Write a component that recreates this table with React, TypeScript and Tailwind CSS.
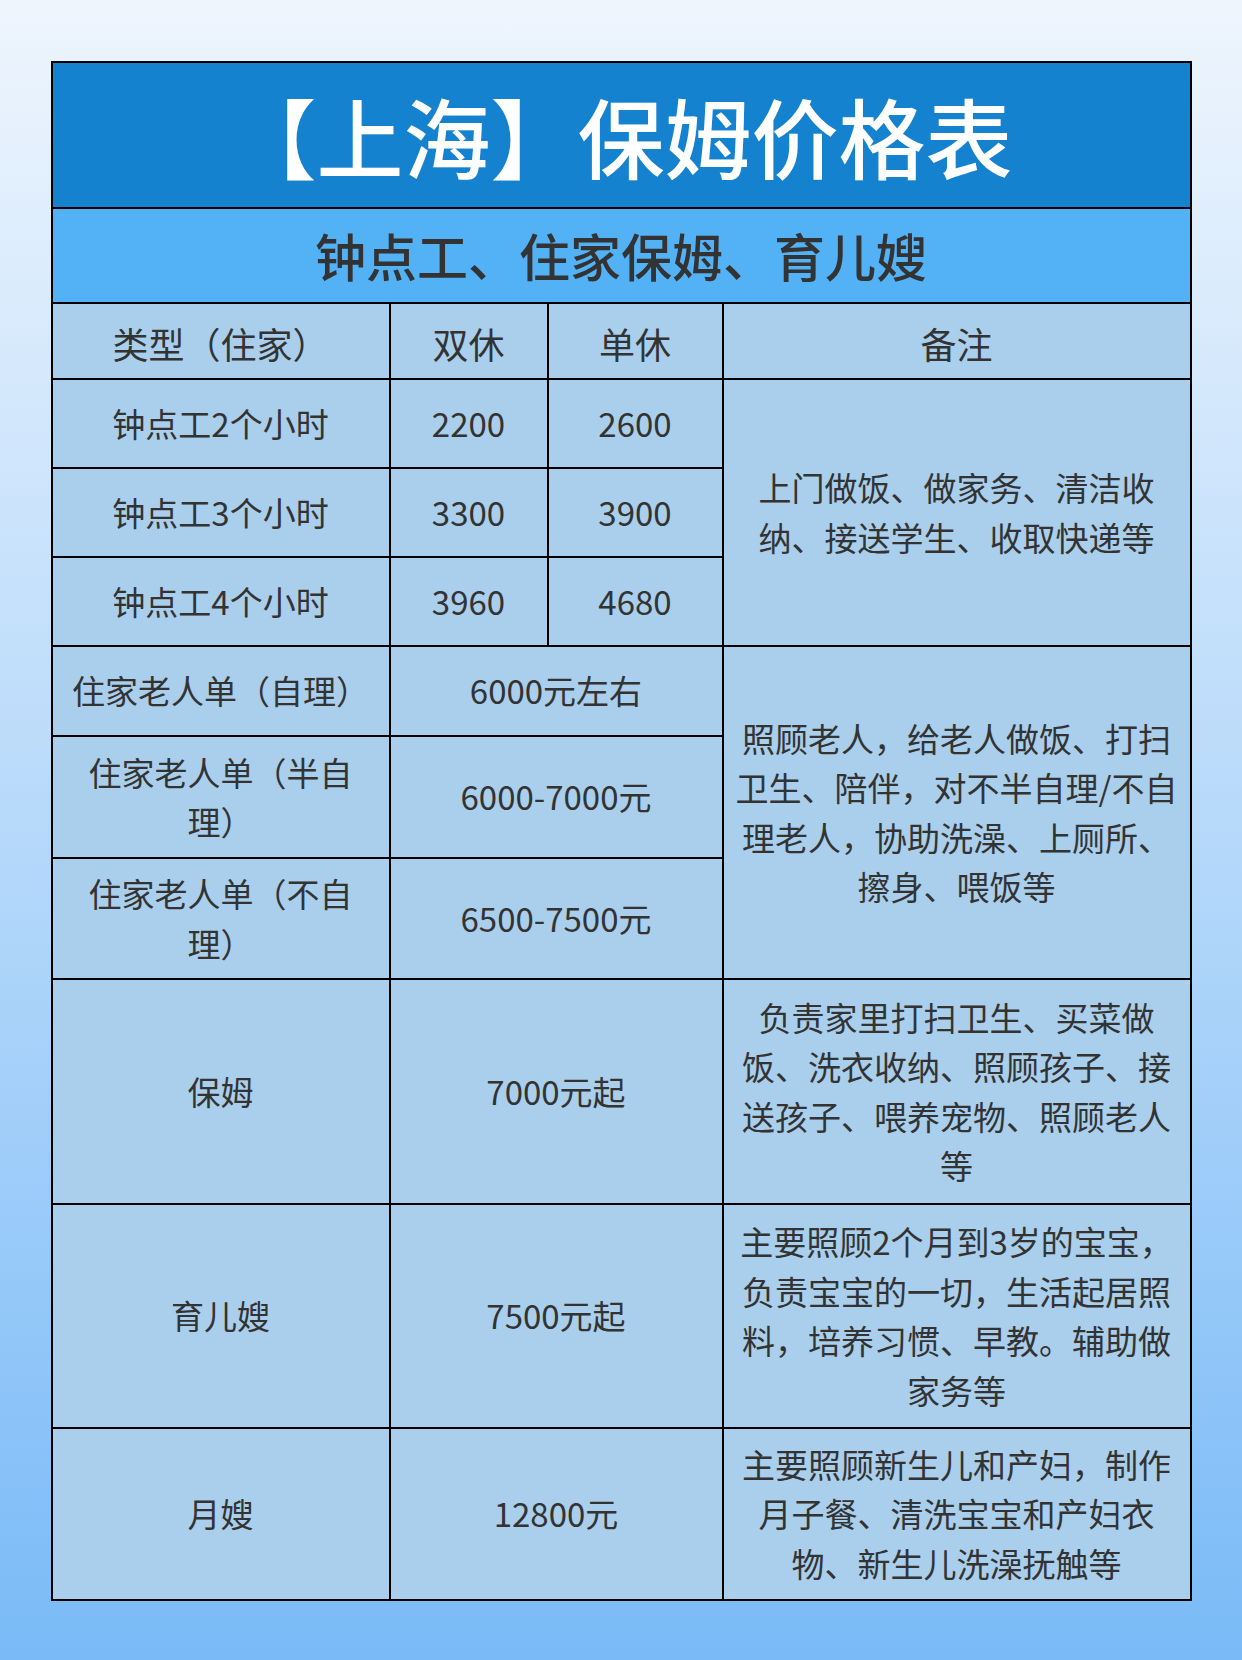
import React from 'react';

const cell = 'bg-[#a9cfec] flex items-center justify-center text-center px-3 text-[33px] leading-[1.5] text-[#333333]';
const head = 'bg-[#a9cfec] flex items-center justify-center text-center px-3 pt-[3px] text-[36px] leading-[1.5] text-[#333333]';

const hourly = [
  { name: '钟点工2个小时', a: '2200', b: '2600' },
  { name: '钟点工3个小时', a: '3300', b: '3900' },
  { name: '钟点工4个小时', a: '3960', b: '4680' },
];

const elderly = [
  { name: '住家老人单（自理）', price: '6000元左右' },
  { name: '住家老人单（半自理）', price: '6000-7000元' },
  { name: '住家老人单（不自理）', price: '6500-7500元' },
];

const others = [
  {
    name: '保姆',
    price: '7000元起',
    note: '负责家里打扫卫生、买菜做饭、洗衣收纳、照顾孩子、接送孩子、喂养宠物、照顾老人等',
  },
  {
    name: '育儿嫂',
    price: '7500元起',
    note: '主要照顾2个月到3岁的宝宝，负责宝宝的一切，生活起居照料，培养习惯、早教。辅助做家务等',
  },
  {
    name: '月嫂',
    price: '12800元',
    note: '主要照顾新生儿和产妇，制作月子餐、清洗宝宝和产妇衣物、新生儿洗澡抚触等',
  },
];

export default function App() {
  return (
    <div className="w-[1242px] h-[1660px] bg-gradient-to-b from-[#eef5fd] via-[#b6d9fa] to-[#79baf7] pt-[61px] font-['Noto_Sans_CJK_SC','Noto_Sans',sans-serif]">
      <div className="mx-auto w-[1141px] bg-black p-[2px] grid gap-[2px] grid-cols-[336px_156px_173px_466px] grid-rows-[144px_93px_74px_87px_87px_87px_88px_120px_119px_223px_222px_170px]">
        {/* Title */}
        <div className="col-span-4 bg-[#1482cf] flex items-center justify-center text-white text-[87px] font-medium leading-none">
          【上海】保姆价格表
        </div>
        <div className="col-span-4 bg-[#53b1f5] flex items-center justify-center text-[#333333] text-[51px] font-medium leading-none">
          钟点工、住家保姆、育儿嫂
        </div>

        {/* Header */}
        <div className={head}>类型（住家）</div>
        <div className={head}>双休</div>
        <div className={head}>单休</div>
        <div className={head}>备注</div>

        {/* Hourly */}
        {hourly.map((r, i) => (
          <React.Fragment key={r.name}>
            <div className={cell}>{r.name}</div>
            <div className={cell}>{r.a}</div>
            <div className={cell}>{r.b}</div>
            {i === 0 && (
              <div className={`${cell} row-span-3`}>上门做饭、做家务、清洁收纳、接送学生、收取快递等</div>
            )}
          </React.Fragment>
        ))}

        {/* Elderly care */}
        {elderly.map((r, i) => (
          <React.Fragment key={r.name}>
            <div className={cell}>{r.name}</div>
            <div className={`${cell} col-span-2`}>{r.price}</div>
            {i === 0 && (
              <div className={`${cell} row-span-3`}>
                照顾老人，给老人做饭、打扫卫生、陪伴，对不半自理/不自理老人，协助洗澡、上厕所、擦身、喂饭等
              </div>
            )}
          </React.Fragment>
        ))}

        {/* Others */}
        {others.map((r) => (
          <React.Fragment key={r.name}>
            <div className={cell}>{r.name}</div>
            <div className={`${cell} col-span-2`}>{r.price}</div>
            <div className={cell}>{r.note}</div>
          </React.Fragment>
        ))}
      </div>
    </div>
  );
}
